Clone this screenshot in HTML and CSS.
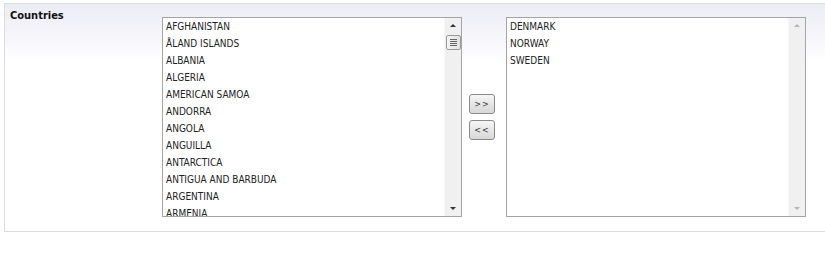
FILE: index.html
```html
<!DOCTYPE html>
<html lang="en">
<head>
    <meta charset="utf-8">
    <title>Countries</title>
    <link rel="stylesheet" href="styles.css">
</head>
<body>
    <div class="panel">
        <div class="label">Countries</div>
        <div class="listbox">
            <div class="items">
                <div>AFGHANISTAN</div>
                <div>ÅLAND ISLANDS</div>
                <div>ALBANIA</div>
                <div>ALGERIA</div>
                <div>AMERICAN SAMOA</div>
                <div>ANDORRA</div>
                <div>ANGOLA</div>
                <div>ANGUILLA</div>
                <div>ANTARCTICA</div>
                <div>ANTIGUA AND BARBUDA</div>
                <div>ARGENTINA</div>
                <div>ARMENIA</div>
            </div>
            <div class="scrollbar">
                <span class="arrow up"></span>
                <span class="thumb"><i></i><i></i><i></i><i></i></span>
                <span class="track"></span>
                <span class="arrow down"></span>
            </div>
        </div>
        <div class="moves">
            <button>&gt;&gt;</button>
            <button>&lt;&lt;</button>
        </div>
        <div class="listbox">
            <div class="items">
                <div>DENMARK</div>
                <div>NORWAY</div>
                <div>SWEDEN</div>
            </div>
            <div class="scrollbar disabled">
                <span class="arrow up"></span>
                <span class="track"></span>
                <span class="arrow down"></span>
            </div>
        </div>
    </div>
</body>
</html>
```

FILE: styles.css
```css
* {
    margin: 0;
    padding: 0;
    box-sizing: border-box;
}
body {
    font-family: "DejaVu Sans Condensed", "DejaVu Sans", sans-serif;
    font-size: 10px;
    color: #222;
    background: #fff;
}
.panel {
    display: flex;
    align-items: flex-start;
    margin: 3px 0 0 4px;
    height: 229px;
    padding: 4px 0 0 5px;
    border: 1px solid #dcdcdc;
    border-right: none;
    background: linear-gradient(#ebebf5, #fff 60px);
}
.label {
    width: 152px;
    padding-top: 1px;
    font-size: 11px;
    font-weight: bold;
    color: #111;
}
.listbox {
    display: flex;
    width: 300px;
    height: 200px;
    margin-top: 9px;
    border: 1px solid #a5a5a5;
    background: #fff;
    overflow: hidden;
}
.items {
    flex: 1;
    padding-left: 3px;
    line-height: 17px;
    overflow: hidden;
}
.scrollbar {
    display: flex;
    flex-direction: column;
    align-items: center;
    width: 17px;
    background: #f0f0f0;
    border-left: 1px solid #f6f6f6;
}
.arrow {
    height: 17px;
    width: 100%;
    position: relative;
}
.arrow::after {
    content: "";
    position: absolute;
    left: 5px;
    border-left: 3px solid transparent;
    border-right: 3px solid transparent;
}
.arrow.up::after {
    top: 6px;
    border-bottom: 3px solid #333;
}
.arrow.down::after {
    top: 8px;
    border-top: 3px solid #333;
}
.disabled .arrow.up::after {
    border-bottom-color: #b5b5b5;
}
.disabled .arrow.down::after {
    border-top-color: #b5b5b5;
}
.thumb {
    display: flex;
    flex-direction: column;
    align-items: center;
    justify-content: center;
    gap: 1px;
    width: 15px;
    height: 15px;
    border: 1px solid #9a9a9a;
    border-radius: 2px;
    background: linear-gradient(90deg, #f4f4f4, #e2e2e2);
}
.thumb i {
    width: 7px;
    height: 1px;
    background: #666;
}
.track {
    flex: 1;
}
.moves {
    display: flex;
    flex-direction: column;
    gap: 6px;
    margin: 86px 11px 0 7px;
}
button {
    width: 26px;
    height: 20px;
    font-family: "DejaVu Sans", sans-serif;
    font-size: 8px;
    letter-spacing: 1px;
    color: #333;
    border: 1px solid #8a8a8a;
    border-radius: 3px;
    background: linear-gradient(#f6f6f6, #e6e6e6 50%, #d8d8d8);
    cursor: pointer;
}
```
